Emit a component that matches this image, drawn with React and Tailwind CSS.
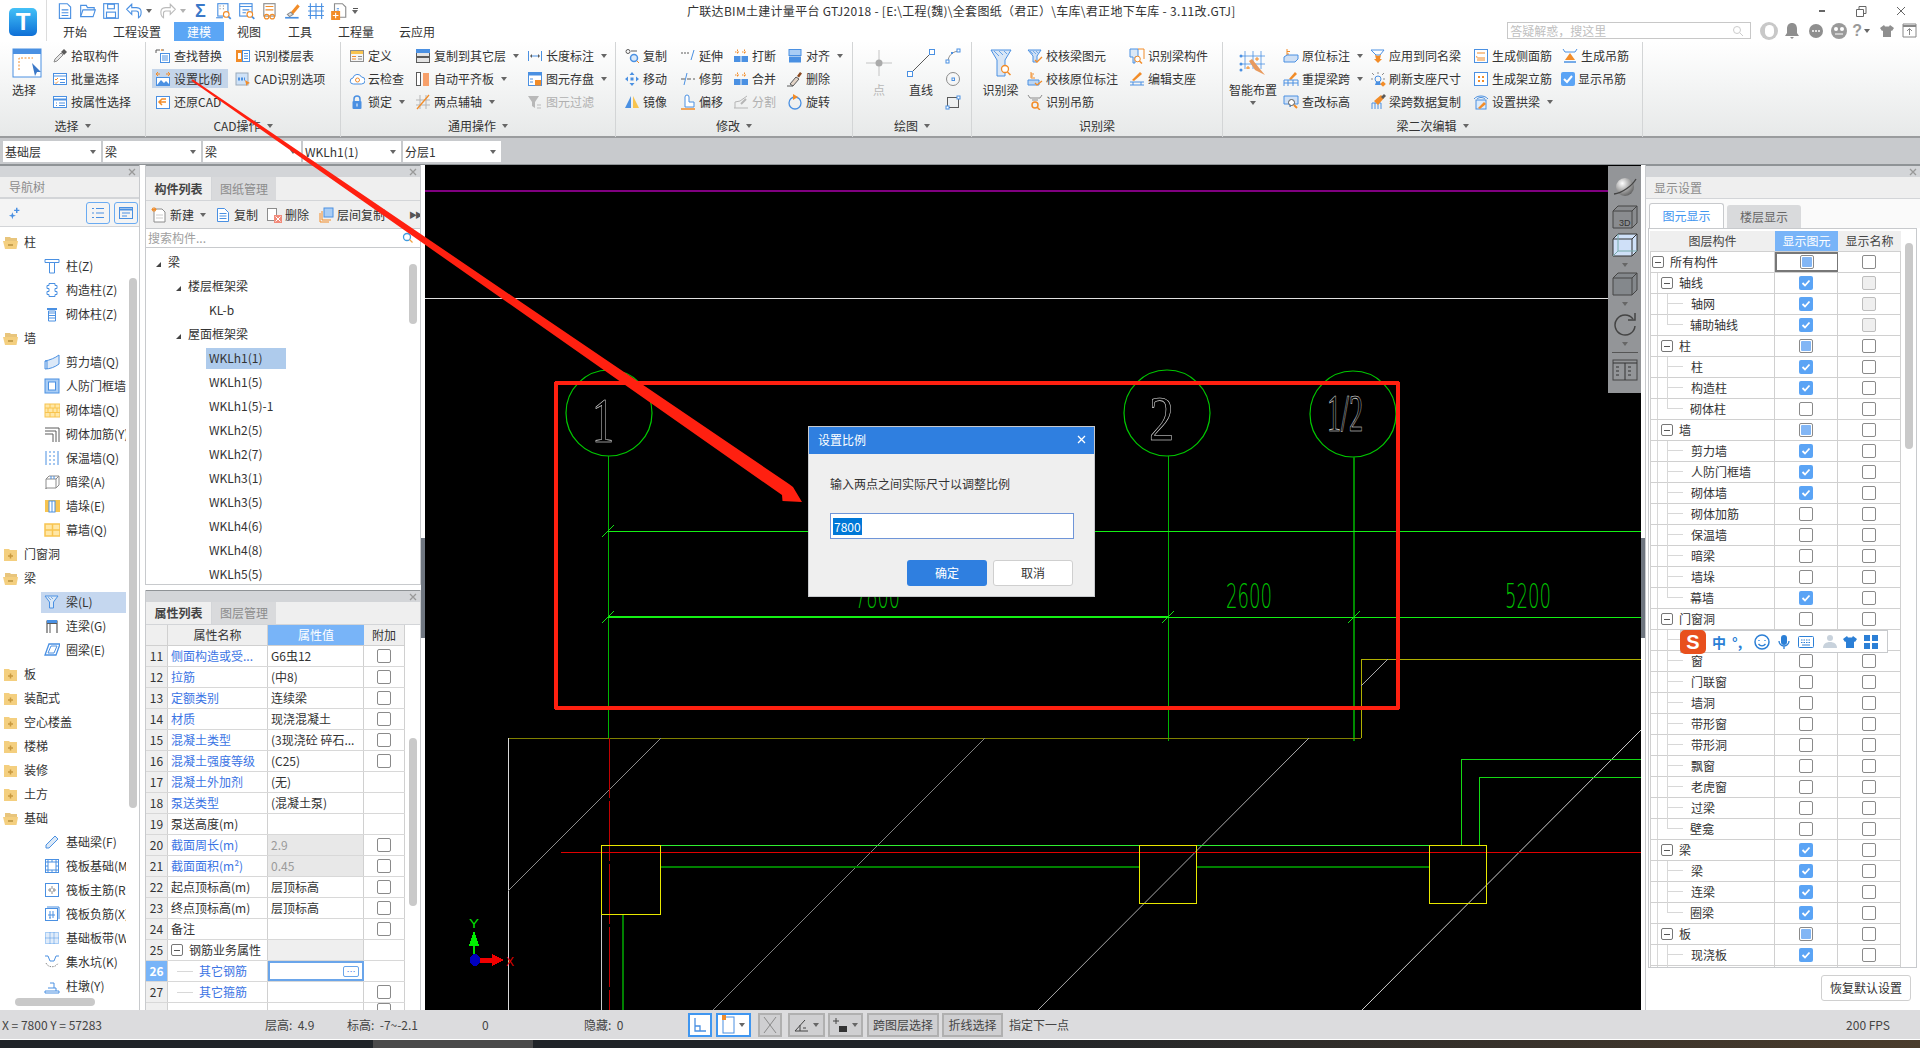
import React from 'react';

const B = '#4a90e2', O = '#f28c28', G = '#8c8c8c', L = '#a9cdf5', Y = '#f8c44f', D = '#5a5a5a';

const ICONS = {
  pick: <><path d="M2 14l1-3 6-6 2 2-6 6z" fill="#e6e6e6" stroke={G} /><path d="M9 4l3-3 3 3-3 3z" fill={D} /></>,
  batch: <><rect x="1.5" y="2.5" width="13" height="11" fill="#fff" stroke={B} /><path d="M1.5 5h13" stroke={B} /><path d="M3 8l1 1 2-2M3 11.500l1 1 2-2" stroke={O} /><path d="M8 8.500h5M8 11.500h5" stroke={B} /></>,
  attr: <><rect x="1.5" y="2.500" width="13" height="11" fill="#fff" stroke={B} /><path d="M1.500 5.500h13" stroke={B} strokeWidth="2" /><path d="M4 9h1M7 9h6M4 11.500h1M7 11.500h6" stroke={B} /></>,
  find: <><path d="M1 5V2h4M7 2h2" stroke={D} /><path d="M6 1l2 1-2 1z" fill={O} /><rect x="5.500" y="5.500" width="9" height="9" fill="#fff" stroke={B} /><path d="M7 8h6M7 10h6M7 12h6" stroke={B} /></>,
  scale: <><path d="M1 3h4M11 3h4" stroke={O} /><path d="M1 3l2-2M1 3l2 2M15 3l-2-2M15 3l-2 2" stroke={O} /><rect x="1.500" y="6.500" width="13" height="8" fill="#fff" stroke={B} /><path d="M2 14l4-5 3 3 2-2 4 4z" fill={B} /></>,
  restore: <><rect x="1.500" y="2.500" width="13" height="12" fill="#fff" stroke={B} /><path d="M11 5H7l-3 3 3 3M5 8h6" stroke={O} strokeWidth="1.500" fill="none" /></>,
  floor: <><rect x="1" y="2" width="6" height="12" fill={O} /><rect x="3" y="5" width="3" height="6" fill="#fff" /><rect x="7.500" y="2.500" width="7" height="11" fill="#fff" stroke={B} /><path d="M9 5.500h4M9 8h4M9 10.500h4" stroke={B} /></>,
  cadopt: <><rect x="1" y="2" width="12" height="12" fill="#cfe2f7" stroke="#9ab" /><path d="M3 8h7" stroke={B} strokeWidth="3" strokeDasharray="2 1" /><path d="M10 9l5 3-2.500 1-1 2z" fill={O} /></>,
  define: <><rect x="1.500" y="2.500" width="13" height="11" fill="#f5f5f5" stroke={G} /><rect x="2" y="3" width="12" height="3" fill={Y} /><path d="M3 8.500h4M3 11h4" stroke={O} /><path d="M9 8.500h4M9 11h4" stroke={G} /></>,
  cloud: <><path d="M4.500 13a3 3 0 0 1-.5-6 4.500 4.500 0 0 1 8.500-1 3.500 3.500 0 0 1 0 7z" fill="#fff" stroke={B} /><circle cx="8.500" cy="9" r="2" stroke={O} /></>,
  lock: <><path d="M5 7V5a3 3 0 0 1 6 0v2" stroke={B} strokeWidth="1.500" /><rect x="3.500" y="7" width="9" height="8" rx="1" fill={B} /><rect x="7.500" y="9.500" width="1" height="3" fill="#fff" /></>,
  copyf: <><rect x="1.500" y="1.500" width="13" height="13" fill="#e4e4e4" stroke={D} /><rect x="1" y="1" width="14" height="4" fill={B} /><path d="M2 9h12" stroke={D} strokeWidth="2" /></>,
  autofl: <><rect x="1.500" y="1.500" width="4" height="13" fill="#fff" stroke={D} /><rect x="8" y="2" width="6" height="13" fill="#f7a06a" /></>,
  twopt: <><path d="M1 6h14M1 11h14M5 1v14M11 1v14" stroke="#b5b5b5" /><path d="M2 15L14 1" stroke={O} strokeWidth="1.300" /></>,
  lenm: <><path d="M1.500 3v10M14.500 3v10M4 8h8" stroke={B} /><path d="M3 8l2-2v4zM13 8l-2-2v4z" fill={D} /></>,
  store: <><rect x="1.500" y="1.500" width="13" height="13" fill="#fff" stroke={B} /><rect x="1" y="1" width="14" height="3.500" fill={B} /><rect x="8" y="9" width="6" height="5.500" fill={O} /><path d="M3 8h3M3 11h3" stroke={B} /></>,
  filter: <><path d="M1 2h11L8 8v6l-3-2V8z" fill="#b8b8b8" /><path d="M10 11h4M10 14h4" stroke="#bbb" /></>,
  copy: <><circle cx="4" cy="3.500" r="2" stroke={D} fill="none" /><path d="M7 3h6" stroke={D} /><circle cx="10" cy="10" r="3.500" fill="#dbe9f8" stroke={B} strokeWidth="1.500" /><path d="M13 13l2 2" stroke={O} /></>,
  move: <><path d="M8 1l2.500 3h-5zM8 15l2.500-3h-5zM1 8l3-2.500v5zM15 8l-3-2.500v5z" fill={B} /><rect x="6.500" y="6.500" width="3" height="3" fill={B} /></>,
  mirror: <><path d="M7 2v12H1z" fill={B} /><path d="M9 2v12h6z" fill={Y} /></>,
  extend: <><path d="M1 5h8" stroke={D} strokeDasharray="2 1" /><path d="M11 12l3-10" stroke={B} /></>,
  trim: <><path d="M1 8h14" stroke={D} strokeDasharray="4 2" /><path d="M4 14l3-12" stroke={B} /></>,
  offset: <><path d="M5 13V3a2 2 0 0 1 4 0v5h5v5z" fill="#fff" stroke={B} /><path d="M1 15h14" stroke={O} strokeWidth="1.500" /></>,
  brk: <><rect x="1" y="8" width="6.500" height="6" fill={B} /><rect x="8.500" y="8" width="6.500" height="6" fill={B} /><path d="M2 4h5M9 4h5M4.500 1.500v5M11.500 1.500v5" stroke={O} strokeDasharray="1.500 1" /></>,
  split: <><path d="M1 14h14M2 14V8l5-1 7-5" stroke="#b5b5b5" /><path d="M8 10l5-5" stroke="#b5b5b5" strokeWidth="2" /></>,
  align: <><rect x="2" y="1.500" width="12" height="6" fill={L} stroke={B} /><rect x="2" y="8.500" width="12" height="6" fill={B} /></>,
  del: <><path d="M3 13l6-7 3 2-6 7z" fill="#e2d3c6" stroke={D} /><path d="M10 5l3-4 2 1.500-3 4z" fill="#8b4a20" /><path d="M0 15h6" stroke={D} /></>,
  rotate: <><circle cx="8" cy="9" r="6" stroke={B} strokeWidth="1.300" /><path d="M6 0l5 3-5 3z" fill={O} /></>,
  arc: <><path d="M3 14c0-6 4-10 10-11" stroke={G} fill="none" /><rect x="1" y="12" width="3" height="3" fill="#fff" stroke={B} /><rect x="12" y="1" width="3" height="3" fill="#fff" stroke={B} /><rect x="6" y="4" width="2" height="2" fill={B} /></>,
  circ: <><circle cx="8" cy="8" r="6.500" stroke={G} /><rect x="7" y="7" width="2.500" height="2.500" stroke={B} /></>,
  rct: <><rect x="2.500" y="3.500" width="11" height="10" stroke={D} /><rect x="1" y="12" width="3" height="3" fill="#fff" stroke={B} /><rect x="12" y="2" width="3" height="3" fill="#fff" stroke={B} /></>,
  chkbeam: <><path d="M1 2h13L10 8v6H6V8z" fill="#cfe0f5" stroke={B} /><path d="M3 3l3 3M6 3l3 3M9 3l2 2" stroke={B} strokeWidth=".7" /><path d="M8 12l2 2 5-5" stroke={O} strokeWidth="1.300" /></>,
  chkorig: <><path d="M4 1v6h4M4 3h3M4 5h2" stroke={O} /><path d="M1 9h11v5H1z" fill="#bcd6f3" stroke={B} /><path d="M8 12l2 2 5-4" stroke={O} strokeWidth="1.300" /></>,
  hang: <><path d="M1 1l2 3h10l2-3M5 6h6" stroke={G} /><circle cx="8" cy="11" r="3" stroke={O} strokeWidth="1.500" /><path d="M10 13l3 3" stroke={O} strokeWidth="1.500" /></>,
  idcomp: <><path d="M1 1h8v8H6v6H4V9H1z" fill="#dbe8f6" stroke={B} /><path d="M9 1h6v10" stroke={O} /><circle cx="8.500" cy="11" r="2.800" stroke={O} fill="#fff" /><path d="M10.500 13l2.500 2.500" stroke={O} strokeWidth="1.500" /></>,
  support: <><path d="M3 9l8-8 2 2-8 7z" fill={O} /><path d="M1 11h14M1 14h14M4 11v3M12 11v3" stroke={B} /></>,
  orig: <><path d="M4 1v7h4M4 3.500h3M4 6h2" stroke={O} /><path d="M1 9l3-2h11v4l-3 3H1z" fill="#cfe0f5" stroke={B} /></>,
  applysame: <><path d="M1 2h13L10 7H6z" stroke={B} fill="#fff" /><path d="M5 7l3 1 3-1-1 4h2l-4 4-4-4h2z" fill={O} /></>,
  reraise: <><path d="M6 8l6-7 2 2-6 6z" fill={O} /><path d="M1 15V9h14v6M5 9v6M10 9v6M1 12h14" stroke={B} /></>,
  refresh: <><path d="M2 2l2 2M14 2l-2 2M1 8h2M13 8h2M8 1v2" stroke={G} /><circle cx="8" cy="8" r="3" stroke={B} /><path d="M6 11h4l1 3H5z" fill={B} /><rect x="11" y="11" width="4" height="4" fill={O} transform="rotate(45 13 13)" /></>,
  sidebar: <><rect x="1.500" y="1.500" width="13" height="13" fill="#fff" stroke={B} /><path d="M4 5h8M4 8c-1 1 0 2 1 2h7M4 12h8" stroke={O} fill="none" /></>,
  erect: <><rect x="1.500" y="1.500" width="13" height="13" fill="#fff" stroke={B} /><path d="M5 5h2v2H5zM9 5h2v2H9zM5 9h2v2H5zM9 9h2v2H9z" fill={O} /></>,
  hangrb: <><path d="M1 1l2 3h10l2-3" stroke={B} /><path d="M8 5l5 7H3z" fill={O} /><path d="M2 14h12" stroke={B} strokeWidth="1.500" /></>,
  chg: <><path d="M1 2h14v8H9l-2 3V10H1z" fill="#cfe0f5" stroke={B} /><circle cx="8.500" cy="8.500" r="3" fill="#fff" stroke={D} /><path d="M11 11l3 3" stroke={O} strokeWidth="2" /></>,
  spancopy: <><path d="M2 15V9h9v6M5 9v6M8 9v6" stroke={B} /><path d="M4 7l7-6 3 3-6 7z" fill={O} /><path d="M11 3l3-3 2 2-3 3z" fill={D} /></>,
  arch: <><path d="M1 5c3-4 11-4 14 0M4 5c2-2 6-2 8 0" stroke={B} fill="none" /><rect x="3" y="6" width="10" height="9" fill="#dcebfa" stroke={B} /><path d="M5 14l6-6 2 2-6 5z" fill={O} /></>,
  shoW: <><rect x="1" y="1" width="14" height="14" rx="2" fill="#5ba4f5" /><path d="M4 8l3 3 5-6" stroke="#fff" strokeWidth="2" /></>,
  qnew: <><path d="M3 1.500h7l3 3v10H3z" fill="#fff" stroke={B} /><path d="M5 7h6M5 9.500h6M5 12h6" stroke={B} /></>,
  qopen: <><path d="M1.500 13V3h5l1 2h6v2" stroke={B} /><path d="M1.500 13l2-6h11l-2 6z" fill="#fff" stroke={B} /></>,
  qsave: <><rect x="1.500" y="1.500" width="13" height="13" fill="#fff" stroke={B} /><rect x="5" y="2" width="6" height="4" stroke={B} /><rect x="4" y="9" width="8" height="5" stroke={B} /></>,
  qundo: <><path d="M6 2L1.500 6.500 6 11V8h4a2 2 0 0 1 2 2v4c2-1 3-4 2-7-.7-1.500-2-2-4-2H6z" fill="#fff" stroke={B} /></>,
  qredo: <><path d="M10 2l4.500 4.500L10 11V8H6a2 2 0 0 0-2 2v4C2 13 1 10 2 7c.7-1.500 2-2 4-2h4z" fill="#fff" stroke="#bbb" /></>,
  qcalc: <><rect x="2.500" y="1.500" width="9" height="11" fill="#fff" stroke={B} /><path d="M4 3.500h1M7 3.500h1M4 6h1M7 6h1" stroke={G} /><circle cx="10" cy="11" r="2.500" stroke={O} fill="#fff" /><path d="M12 13l2 2" stroke={B} strokeWidth="1.500" /><path d="M1 14h6" stroke={B} /></>,
  qgrid: <><rect x="1.500" y="1.500" width="11" height="11" fill="#fff" stroke={B} /><path d="M1.500 4h11M4 7h6M4 9.500h3" stroke={B} /><circle cx="10.500" cy="11" r="2.500" stroke={O} fill="#fff" /><path d="M12.500 13l2 2" stroke={B} strokeWidth="1.500" /></>,
  qbill: <><rect x="2.500" y="1.500" width="10" height="11" fill="#fff" stroke={G} /><path d="M4 4h7M4 7h7" stroke={O} /><circle cx="5" cy="13" r="2" stroke={O} /><circle cx="10" cy="13" r="2" stroke={O} /></>,
  qpen: <><path d="M6 9l6-7 2 2-6 7z" fill={O} /><path d="M1 14h12" stroke={B} strokeWidth="1.500" /><path d="M3 11l3-2 2 2-3 2z" fill="#ddd" stroke={G} /></>,
  qnet: <><path d="M3 1v14M8 1v14M13 1v14M1 4h14M1 8h14M1 12h14" stroke={B} /></>,
  qadd: <><path d="M4 1.500h7l3 3v9H4z" fill="#fff" stroke={G} /><path d="M6 6h2M6 8h2" stroke={B} /><rect x="1" y="8" width="8" height="8" fill={O} /><path d="M5 9.500v5M2.500 12h5" stroke="#fff" /></>,
  ncol: <><path d="M1 1.500h14v3H1z" stroke={B} fill="#fff" /><path d="M5.500 4.500h5V15h-5z" stroke={B} fill="#fff" /></>,
  ngzz: <><path d="M5 1.500h6v2h2v3h-2v3h2v3h-2v2H5v-2H3v-3h2v-3H3v-3h2z" stroke={B} fill="#fff" /></>,
  nqtz: <><path d="M3 2h10v2H3z" fill={B} /><path d="M4.500 5h7v10h-7z" stroke={B} fill="#fff" /><path d="M5 7h6M5 9.500h6M5 12h6" stroke={B} /></>,
  njlq: <><path d="M1 7c5-1 10-3 14-6v9c-4 3-9 5-14 5z" fill="#dce9f8" stroke={B} /><path d="M1 7h2v8M15 1" stroke={B} /></>,
  nrfm: <><rect x="1" y="1" width="14" height="14" fill={L} stroke={B} /><rect x="4.500" y="4" width="7" height="8" fill="#fff" stroke={B} /></>,
  nbrick: <><rect x="1" y="2" width="15" height="13" fill="#ffe7a6" stroke={Y} /><path d="M1 6h15M1 10.500h15M6 2v4M11 2v4M4 6v4.500M9 6v4.500M13 6v4.500M6 10.500V15M11 10.500V15" stroke={Y} /></>,
  njj: <><path d="M1 2h14M1 5h11v11M1 8h8v8" stroke={D} /><path d="M15 2v14" stroke={D} /></>,
  nbw: <><path d="M2 1v14M14 1v14" stroke={B} /><path d="M6 1v14M10 1v14" stroke={B} strokeDasharray="2 2" /></>,
  nal: <><path d="M2 15V5l3-3h10v9l-3 3H2zM2 5h10v9M12 5l3-3" stroke={G} fill="#fff" /><path d="M7 2v3M10 2v3" stroke={B} /></>,
  nqd: <><rect x="1" y="2" width="15" height="12" fill={Y} /><rect x="5" y="3" width="6" height="11" fill="#fff" stroke={B} /><path d="M8 3v11" stroke={B} /></>,
  nmq: <><rect x="1" y="2" width="15" height="12" fill="#ffe7a6" stroke={Y} strokeWidth="1.500" /><path d="M8.500 2v12M1 8h15" stroke={Y} strokeWidth="1.500" /></>,
  nliang: <><path d="M1 2h13L9.500 8v6h-4V8z" fill="#dbe8f6" stroke={B} /><path d="M4 3l3 3M7 3l2 2" stroke={B} strokeWidth=".7" /></>,
  nll: <><path d="M3 15V3h10v12M3 5.500h10" stroke={D} strokeWidth="1.200" /><path d="M3 2h10v3H3z" fill={B} /><path d="M6 6v9" stroke={D} /></>,
  nql: <><path d="M5 2h11l-4 11H1z" fill="#fff" stroke={B} strokeWidth="1.300" /><path d="M7 4h6l-3 7H4z" stroke={B} /></>,
  njcl: <><path d="M2 11L11 2l3 3-9 9H2z" fill="#dbe8f6" stroke={B} /><path d="M4 9l5-5" stroke={B} strokeDasharray="2 1" /></>,
  nfb: <><rect x="1.500" y="1.500" width="13" height="13" fill="#fff" stroke={B} /><rect x="4" y="4" width="8" height="8" stroke={B} /><path d="M1 4h3M1 8h3M1 12h3M12 4h3M12 8h3M12 12h3M4 1v3M8 1v3M12 1v3M4 12v3M8 12v3M12 12v3" stroke={B} /></>,
  nfz: <><rect x="1.500" y="1.500" width="13" height="13" fill="#fff" stroke={B} /><path d="M4 8h3M9 8h3M8 4v3M8 9v3M6 6v4M10 6v4" stroke={G} /></>,
  nff: <><rect x="1.500" y="2.500" width="12" height="12" fill="#fff" stroke={B} /><path d="M3 1h12v12" stroke={B} /><path d="M4 9h7M6 5v7M9 5v7M5 12h2" stroke={B} /></>,
  njb: <><rect x="1.500" y="2.500" width="13" height="11" fill="#e0ecfa" stroke={L} /><path d="M6 2.500v11M10 2.500v11M1.500 8h13" stroke={B} strokeDasharray="1 1" /></>,
  njs: <><path d="M1 2h3l2 5h4l2-5h3" stroke={B} /><path d="M2 9c2 5 10 5 12 0" stroke={G} strokeDasharray="1.500 1" /></>,
  nzd: <><path d="M1 13h14v2H1zM4 10h8v3M6 5h4v5" stroke={B} fill="#fff" /></>,
  cnew: <><path d="M3 2h8l3 3v10H3z" fill="#fff" stroke={G} /><path d="M5 8h7M5 11h7" stroke="#ccc" /><path d="M3 0v5M0.500 2.500h5M1 1l4 3M5 1L1 4" stroke={O} /></>,
  ccopy: <><path d="M2.500 1.500h7l4 4v9h-11z" fill="#fff" stroke={B} /><path d="M4.500 6.500h7M4.500 9h7M4.500 11.500h7" stroke={B} /></>,
  cdel: <><rect x="1.500" y="1.500" width="9" height="12" fill="#fff" stroke={G} /><rect x="8" y="8" width="8" height="8" fill="#f28a7a" /><path d="M9.500 9.500l5 5M14.500 9.500l-5 5" stroke="#fff" /></>,
  clayer: <><rect x="6" y="1" width="9" height="9" fill={L} stroke={B} /><path d="M4 4v9h9M2 6v9h9" stroke={O} /></>,
  cplus: <><path d="M1 11l3-1 1-3 1 3 3 1-3 1-1 3-1-3z" fill={B} /><path d="M10 2v6M7 5h6" stroke={B} strokeWidth="1.700" /></>,
};

const Ic = ({ n, s = 16 }) => (
  <svg width={s} height={s} viewBox="0 0 16 16" fill="none" className="flex-none block">{ICONS[n]}</svg>
);

const Caret = ({ c = 'ml-[7px]' }) => (
  <span className={'inline-block flex-none w-0 h-0 border-x-[3px] border-t-[4px] border-x-transparent border-t-[#666] ' + c} />
);

const RI = ({ i, t, dd, dim }) => (
  <div className="flex items-center h-[23px]">
    <Ic n={i} />
    <span className={'ml-[3px] whitespace-nowrap ' + (dim ? 'text-[#b0b0b0]' : '')}>{t}</span>
    {dd && <Caret />}
  </div>
);

const Group = ({ w, label, dd, pad, children }) => (
  <div className={'flex flex-col h-[95px] mt-[1px] flex-none border-r border-[#d3d5d6] ' + w}>
    <div className={'flex pt-[2px] h-[75px] ' + pad}>{children}</div>
    <div className="flex items-center justify-center h-[18px] text-[#333]">
      <span>{label}</span>
      {dd && <Caret c="ml-[6px]" />}
    </div>
  </div>
);

const LargeSvg = ({ children }) => (
  <svg width="30" height="30" viewBox="0 0 30 30" fill="none" className="flex-none block">{children}</svg>
);

const Large = ({ w, t, dim, children, dd }) => (
  <div className={'flex flex-col items-center flex-none pt-[4px] ' + w}>
    <LargeSvg>{children}</LargeSvg>
    <span className={'mt-[6px] whitespace-nowrap ' + (dim ? 'text-[#b8b8b8]' : '')}>{t}</span>
    {dd && <Caret c="mt-[5px]" />}
  </div>
);

const Col = ({ w, children }) => <div className={'flex flex-col flex-none ' + w}>{children}</div>;

const Ribbon = () => (
  <div className="flex h-[97px] bg-gradient-to-b from-white to-[#e7e9e9] border-b-2 border-[#9a9c9e]">
    <Group w="w-[146px]" label="选择" dd pad="pl-[13px]">
      <Large w="w-[40px] items-start -ml-[1px]" t="选择">
        <rect x="1" y="1" width="28" height="28" fill="#fff" stroke={B} />
        <rect x="1" y="1" width="28" height="5" fill={B} />
        <path d="M7 22V10h14" stroke={O} strokeDasharray="2 1.500" />
        <path d="M20 15l9 9-4 0-2 4z" fill="#3a78c8" />
      </Large>
      <Col w="w-[90px]">
        <RI i="pick" t="拾取构件" />
        <RI i="batch" t="批量选择" />
        <RI i="attr" t="按属性选择" />
      </Col>
    </Group>
    <Group w="w-[195px]" label="CAD操作" dd pad="pl-[9px]">
      <Col w="w-[80px]">
        <RI i="find" t="查找替换" />
        <div className="flex items-center h-[19px] my-[2px] -ml-[3px] pl-[3px] w-[76px] bg-[#c4d5ea]">
          <Ic n="scale" />
          <span className="ml-[3px] whitespace-nowrap">设置比例</span>
        </div>
        <RI i="restore" t="还原CAD" />
      </Col>
      <Col w="w-[100px]">
        <RI i="floor" t="识别楼层表" />
        <RI i="cadopt" t="CAD识别选项" />
      </Col>
    </Group>
    <Group w="w-[275px]" label="通用操作" dd pad="pl-[8px]">
      <Col w="w-[66px]">
        <RI i="define" t="定义" />
        <RI i="cloud" t="云检查" />
        <RI i="lock" t="锁定" dd />
      </Col>
      <Col w="w-[112px]">
        <RI i="copyf" t="复制到其它层" dd />
        <RI i="autofl" t="自动平齐板" dd />
        <RI i="twopt" t="两点辅轴" dd />
      </Col>
      <Col w="w-[85px]">
        <RI i="lenm" t="长度标注" dd />
        <RI i="store" t="图元存盘" dd />
        <RI i="filter" t="图元过滤" dim />
      </Col>
    </Group>
    <Group w="w-[237px]" label="修改" dd pad="pl-[8px]">
      <Col w="w-[56px]">
        <RI i="copy" t="复制" />
        <RI i="move" t="移动" />
        <RI i="mirror" t="镜像" />
      </Col>
      <Col w="w-[53px]">
        <RI i="extend" t="延伸" />
        <RI i="trim" t="修剪" />
        <RI i="offset" t="偏移" />
      </Col>
      <Col w="w-[54px]">
        <RI i="brk" t="打断" />
        <RI i="brk" t="合并" />
        <RI i="split" t="分割" dim />
      </Col>
      <Col w="w-[64px]">
        <RI i="align" t="对齐" dd />
        <RI i="del" t="删除" />
        <RI i="rotate" t="旋转" />
      </Col>
    </Group>
    <Group w="w-[119px]" label="绘图" dd pad="pl-[11px]">
      <Large w="w-[30px] mr-[12px]" t="点" dim>
        <path d="M15 2v26M2 15h26" stroke="#c4c4c4" />
        <circle cx="15" cy="15" r="3.500" fill="#aaa" />
      </Large>
      <Large w="w-[30px] mr-[9px]" t="直线">
        <path d="M4 26L26 4" stroke={D} />
        <rect x="1.500" y="23.500" width="5" height="5" fill="#fff" stroke={B} />
        <rect x="23.500" y="1.500" width="5" height="5" fill="#fff" stroke={B} />
      </Large>
      <Col w="w-[16px]">
        <div className="h-[23px] flex items-center"><Ic n="arc" /></div>
        <div className="h-[23px] flex items-center"><Ic n="circ" /></div>
        <div className="h-[23px] flex items-center"><Ic n="rct" /></div>
      </Col>
    </Group>
    <Group w="w-[251px]" label="识别梁" pad="pl-[10px]">
      <Large w="w-[37px] mr-[8px]" t="识别梁">
        <path d="M5 2h20l-6 10v16h-8V12z" fill="#d8e6f6" stroke={B} />
        <path d="M8 3l5 5M13 3l4 4M18 3l3 3" stroke={B} strokeWidth=".8" />
        <circle cx="19" cy="21" r="3.500" fill="#fff" stroke={O} strokeWidth="1.300" />
        <path d="M21.500 24l3 3" stroke={O} strokeWidth="1.500" />
      </Large>
      <Col w="w-[102px]">
        <RI i="chkbeam" t="校核梁图元" />
        <RI i="chkorig" t="校核原位标注" />
        <RI i="hang" t="识别吊筋" />
      </Col>
      <Col w="w-[90px]">
        <RI i="idcomp" t="识别梁构件" />
        <RI i="support" t="编辑支座" />
      </Col>
    </Group>
    <Group w="w-[420px]" label="梁二次编辑" dd pad="pl-[6px]">
      <Large w="w-[48px] mr-[6px]" t="智能布置" dd>
        <path d="M7 3v18M15 3v18M23 3v18M3 8h24M3 16h24" stroke={B} strokeWidth=".8" />
        <circle cx="3" cy="8" r="1.500" fill={B} />
        <circle cx="3" cy="16" r="1.500" fill={B} />
        <circle cx="3" cy="22" r="1.500" fill={B} />
        <path d="M11 11l4-2M17 22l-6-9 3-2 8 10 5 6z" fill="#e89a5e" />
        <path d="M19 9v4M17 11h4M10 18v3M8 20h4" stroke={O} />
      </Large>
      <Col w="w-[87px]">
        <RI i="orig" t="原位标注" dd />
        <RI i="reraise" t="重提梁跨" dd />
        <RI i="chg" t="查改标高" />
      </Col>
      <Col w="w-[103px]">
        <RI i="applysame" t="应用到同名梁" />
        <RI i="refresh" t="刷新支座尺寸" />
        <RI i="spancopy" t="梁跨数据复制" />
      </Col>
      <Col w="w-[89px]">
        <RI i="sidebar" t="生成侧面筋" />
        <RI i="erect" t="生成架立筋" />
        <RI i="arch" t="设置拱梁" dd />
      </Col>
      <Col w="w-[70px]">
        <RI i="hangrb" t="生成吊筋" />
        <div className="-ml-[2px]"><div className="flex items-center h-[23px]"><Ic n="shoW" /><span className="ml-[2px] whitespace-nowrap">显示吊筋</span></div></div>
      </Col>
    </Group>
  </div>
);

const Header = () => (
  <div className="flex h-[41px] bg-white">
    <div className="w-[47px] flex-none border-r border-[#dcdcdc] pl-[9px] pt-[8px] flex items-start">
      <div className="w-[28px] h-[28px] rounded-[5px] bg-gradient-to-b from-[#44c1f7] to-[#0f6fd6] flex items-center justify-center text-white text-[24px] font-bold [font-family:'Liberation_Sans',sans-serif]">T</div>
    </div>
    <div className="flex-1 flex flex-col">
      <div className="flex h-[22px] items-center">
        <div className="flex items-center w-[640px] pl-[6px]">
          {['qnew', 'qopen', 'qsave', 'qundo'].map((n) => (
            <span key={n} className="w-[23px] flex-none flex justify-center"><Ic n={n} s={18} /></span>
          ))}
          <Caret c="ml-[1px] mr-[4px]" />
          <span className="w-[23px] flex-none flex justify-center"><Ic n="qredo" s={18} /></span>
          <Caret c="ml-[1px] mr-[3px] opacity-50" />
          <span className="w-[23px] flex-none text-center text-[#3a78c8] text-[18px] font-bold [font-family:'Liberation_Sans',sans-serif]">Σ</span>
          {['qcalc', 'qgrid', 'qbill', 'qpen', 'qnet', 'qadd'].map((n) => (
            <span key={n} className="w-[23px] flex-none flex justify-center"><Ic n={n} s={18} /></span>
          ))}
          <span className="ml-[2px] flex flex-col items-center gap-[1px]">
            <span className="block w-[5px] h-[1px] bg-[#555]" />
            <Caret c="" />
          </span>
        </div>
        <div className="whitespace-nowrap text-[#333] tracking-[0.3px]">广联达BIM土建计量平台 GTJ2018 - [E:\工程(魏)\全套图纸（君正）\车库\君正地下车库 - 3.11改.GTJ]</div>
        <div className="ml-auto flex items-center text-[#555]">
          <span className="w-[6px] h-[2px] bg-[#666] mr-[30px]" />
          <svg width="12" height="12" viewBox="0 0 12 12" fill="none" className="mr-[28px]"><path d="M1.500 4.500h7v7h-7zM4 4.500v-3h7v7H8.500" stroke="#666" /></svg>
          <svg width="12" height="12" viewBox="0 0 12 12" fill="none" className="mr-[13px]"><path d="M2 2l8 8M10 2l-8 8" stroke="#666" /></svg>
        </div>
      </div>
      <div className="flex h-[19px]">
        <div className="flex h-full items-center">
          <span className="ml-[16px] w-[50px]">开始</span>
          <span className="w-[61px]">工程设置</span>
          <span className="ml-[0px] w-[50px] h-full bg-[#5ba6f5] text-white flex items-center justify-center">建模</span>
          <span className="ml-[13px] w-[51px]">视图</span>
          <span className="w-[50px]">工具</span>
          <span className="w-[61px]">工程量</span>
          <span>云应用</span>
        </div>
        <div className="ml-auto flex items-center pb-[2px]">
          <div className="w-[244px] h-[17px] border border-[#c8c8c8] flex items-center px-[2px] text-[#c0c0c0]">
            <span>答疑解惑，搜这里</span>
            <svg width="12" height="12" viewBox="0 0 12 12" fill="none" className="ml-auto mr-[4px]"><circle cx="5" cy="5" r="3.500" stroke="#ccc" /><path d="M8 8l3 3" stroke="#ccc" /></svg>
          </div>
          <span className="ml-[9px] w-[18px] h-[18px] rounded-full bg-[#c8c8c8] flex items-center justify-center"><span className="block w-[9px] h-[12px] rounded-full bg-white" /></span>
          <svg width="16" height="18" viewBox="0 0 16 18" className="ml-[6px]"><path d="M8 1c3 0 5 2 5 6v4l2 3H1l2-3V7c0-4 2-6 5-6zM6 15h4l-2 2z" fill="#8f8f8f" /></svg>
          <svg width="16" height="16" viewBox="0 0 16 16" className="ml-[8px]"><circle cx="8" cy="8" r="7" fill="#8f8f8f" /><path d="M4 8h2M7 8h2M10 8h2" stroke="#fff" strokeWidth="1.500" /></svg>
          <svg width="18" height="18" viewBox="0 0 18 18" className="ml-[6px]"><circle cx="9" cy="9" r="8" fill="#9a9a9a" /><circle cx="6" cy="7" r="2" fill="#fff" /><circle cx="12" cy="7" r="2" fill="#fff" /><path d="M5 12h8" stroke="#fff" /></svg>
          <span className="ml-[4px] text-[#999] text-[16px] font-bold [font-family:'Liberation_Sans',sans-serif]">?</span>
          <Caret c="ml-[2px]" />
          <svg width="14" height="14" viewBox="0 0 14 14" className="ml-[10px]"><path d="M4 1L0 4l2 3 1-.5V13h8V6.500L12 7l2-3-4-3-1 1.500H5z" fill="#8f8f8f" /></svg>
          <svg width="15" height="15" viewBox="0 0 15 15" fill="none" className="ml-[8px] mr-[3px]"><path d="M1 1h13v13H1z" stroke="#888" /><path d="M1 3h13" stroke="#888" strokeWidth="2" /><path d="M7.500 12V6M5 8l2.500-2.500L10 8" stroke="#888" /></svg>
        </div>
      </div>
    </div>
  </div>
);

const Combo = ({ t }) => (
  <div className="w-[98px] h-[21px] bg-white flex items-center pl-[2px] pr-[5px] text-[#333]">
    <span>{t}</span>
    <Caret c="ml-auto" />
  </div>
);

const ComboBar = () => (
  <div className="flex items-start gap-[2px] h-[27px] pt-[3px] pl-[3px] bg-[#c8cacd] border-b border-[#8f9396]">
    {['基础层', '梁', '梁', 'WKLh1(1)', '分层1'].map((t, i) => <Combo key={i} t={t} />)}
  </div>
);

const PanelTitle = () => (
  <div className="h-[12px] flex-none bg-[#d3d5d8] border-t border-[#8f9396] flex items-center justify-end pr-[3px]">
    <svg width="8" height="8" viewBox="0 0 8 8" fill="none"><path d="M1 1l6 6M7 1L1 7" stroke="#999" strokeWidth="1.300" /></svg>
  </div>
);

const Folder = ({ open }) => (
  <svg width="17" height="15" viewBox="0 0 17 15" className="flex-none">
    {open ? (
      <>
        <path d="M2 2h5l1 1h6v3H2z" fill="#e8c57c" />
        <path d="M0 6h15l-1.500 8H2z" fill="#f4cf7f" />
        <path d="M5 10h5" stroke="#b8923f" strokeWidth="1.500" />
      </>
    ) : (
      <>
        <path d="M1 2h5l1 1h7v11H1z" fill="#f4cf7f" />
        <path d="M5 9h5M7.500 6.500v5" stroke="#c8993f" strokeWidth="1.500" />
      </>
    )}
  </svg>
);

const NAV = [
  ['f', '柱', 1], ['i', '柱(Z)', 'ncol'], ['i', '构造柱(Z)', 'ngzz'], ['i', '砌体柱(Z)', 'nqtz'],
  ['f', '墙', 1], ['i', '剪力墙(Q)', 'njlq'], ['i', '人防门框墙', 'nrfm'], ['i', '砌体墙(Q)', 'nbrick'], ['i', '砌体加筋(Y)', 'njj'], ['i', '保温墙(Q)', 'nbw'], ['i', '暗梁(A)', 'nal'], ['i', '墙垛(E)', 'nqd'], ['i', '幕墙(Q)', 'nmq'],
  ['f', '门窗洞', 0], ['f', '梁', 1], ['s', '梁(L)', 'nliang'], ['i', '连梁(G)', 'nll'], ['i', '圈梁(E)', 'nql'],
  ['f', '板', 0], ['f', '装配式', 0], ['f', '空心楼盖', 0], ['f', '楼梯', 0], ['f', '装修', 0], ['f', '土方', 0], ['f', '基础', 1],
  ['i', '基础梁(F)', 'njcl'], ['i', '筏板基础(M)', 'nfb'], ['i', '筏板主筋(R)', 'nfz'], ['i', '筏板负筋(X)', 'nff'], ['i', '基础板带(W)', 'njb'], ['i', '集水坑(K)', 'njs'], ['i', '柱墩(Y)', 'nzd'],
];

const NavPanel = () => (
  <div className="w-[140px] flex-none flex flex-col border-r border-[#c8cacd] relative bg-white">
    <PanelTitle />
    <div className="h-[22px] flex-none bg-[#efefef] border-b-2 border-[#d3d5d8] flex items-center pl-[9px] text-[#8c8c8c]">导航树</div>
    <div className="h-[28px] flex-none bg-[#f4f4f4] border-b border-[#d3d5d8] flex items-center pl-[8px]">
      <Ic n="cplus" s={14} />
      <span className="ml-auto w-[24px] h-[22px] border border-[#6aabf2] rounded-[3px] flex items-center justify-center">
        <svg width="14" height="14" viewBox="0 0 14 14" fill="none"><path d="M1 2.500h2M5 2.500h8M1 7h2M5 7h8M1 11.500h2M5 11.500h8" stroke={B} /></svg>
      </span>
      <span className="ml-[4px] mr-[1px] w-[24px] h-[22px] border border-[#6aabf2] rounded-[3px] flex items-center justify-center">
        <svg width="14" height="14" viewBox="0 0 14 14" fill="none"><rect x=".5" y="1.500" width="13" height="11" stroke={B} /><path d="M1 3.500h12" stroke={B} strokeWidth="2" /><path d="M3 7h8M3 10h5" stroke={B} /></svg>
      </span>
    </div>
    <div className="flex-1 overflow-hidden pt-[3px] w-[126px] text-[#333]">
      {NAV.map(([k, t, x], idx) =>
        k === 'f' ? (
          <div key={idx} className="flex items-center h-[24px] pl-[3px]">
            <Folder open={x === 1} />
            <span className="ml-[4px] whitespace-nowrap">{t}</span>
          </div>
        ) : (
          <div key={idx} className="flex items-center h-[24px]">
            <div className={'flex items-center h-[21px] w-[85px] pl-[3px] ml-[41px] overflow-hidden ' + (k === 's' ? 'bg-[#c5d7ef]' : '')}>
              <Ic n={x} />
              <span className="ml-[6px] whitespace-nowrap">{t}</span>
            </div>
          </div>
        )
      )}
    </div>
    <div className="absolute left-[129px] top-[113px] w-[8px] h-[530px] rounded-full bg-[#c9c9c9]" />
    <div className="absolute left-[15px] top-[833px] w-[80px] h-[8px] rounded-full bg-[#c9c9c9]" />
  </div>
);

const Tabs2 = ({ a, b, h }) => (
  <div className={'flex-none bg-[#efefef] flex border-b border-[#d3d5d8] ' + h}>
    <div className="w-[65px] flex items-center justify-center font-bold text-[#444]">{a}</div>
    <div className="w-[65px] flex items-center justify-center bg-[#d9dadc] text-[#8c8c8c] border-l border-[#d3d5d8]">{b}</div>
  </div>
);

const TR = ({ t, lvl, sel }) => {
  if (lvl < 2)
    return (
      <div className={'flex items-center h-[24px] ' + (lvl === 0 ? 'pl-[156px]' : 'pl-[176px]')}>
        <span className="w-0 h-0 border-l-[5px] border-t-[5px] border-l-transparent border-t-transparent border-r-0 border-b-[5px] border-b-[#444] mr-[7px]" />
        <span>{t}</span>
      </div>
    );
  return (
    <div className="flex items-center h-[24px] pl-[206px]">
      <span className={'h-[21px] w-[80px] flex items-center pl-[3px] ' + (sel ? 'bg-[#aecbec]' : '')}>{t}</span>
    </div>
  );
};

const CompPanel = () => (
  <div className="h-[420px] flex-none flex flex-col border-b border-[#c8cacd] border-x relative bg-white">
    <PanelTitle />
    <Tabs2 a="构件列表" b="图纸管理" h="h-[24px]" />
    <div className="h-[27px] flex-none bg-[#efefef] flex items-center pl-[5px] whitespace-nowrap overflow-hidden">
      <Ic n="cnew" />
      <span className="ml-[3px] flex-none">新建</span>
      <Caret c="ml-[6px]" />
      <span className="ml-[9px] flex-none"><Ic n="ccopy" /></span>
      <span className="ml-[3px] flex-none">复制</span>
      <span className="ml-[8px] flex-none"><Ic n="cdel" /></span>
      <span className="ml-[3px] flex-none">删除</span>
      <span className="ml-[9px] flex-none"><Ic n="clayer" /></span>
      <span className="ml-[3px] flex-none">层间复制</span>
      <span className="ml-[24px] flex-none text-[#555] text-[8px] tracking-[-2px]">▶▶</span>
    </div>
    <div className="h-[20px] flex-none bg-white border-y border-[#c8cacd] flex items-center pl-[2px] text-[#a0a0a0]">
      <span>搜索构件...</span>
      <svg width="12" height="12" viewBox="0 0 12 12" fill="none" className="ml-auto mr-[6px]"><circle cx="5" cy="5" r="3.500" stroke="#3f9be0" strokeWidth="1.300" /><path d="M7.500 7.500l3 3" stroke="#f0a040" strokeWidth="1.300" /></svg>
    </div>
    <div className="flex-1 overflow-hidden pt-[2px] -ml-[146px] text-[#333]">
      <TR t="梁" lvl={0} />
      <TR t="楼层框架梁" lvl={1} />
      <TR t="KL-b" lvl={2} />
      <TR t="屋面框架梁" lvl={1} />
      <TR t="WKLh1(1)" lvl={2} sel />
      {['WKLh1(5)', 'WKLh1(5)-1', 'WKLh2(5)', 'WKLh2(7)', 'WKLh3(1)', 'WKLh3(5)', 'WKLh4(6)', 'WKLh4(8)', 'WKLh5(5)'].map((t) => (
        <TR key={t} t={t} lvl={2} />
      ))}
    </div>
    <div className="absolute left-[263px] top-[99px] w-[8px] h-[60px] rounded-full bg-[#c9c9c9]" />
  </div>
);

const Box = ({ s = 'u' }) => {
  if (s === 'c')
    return (
      <span className="w-[14px] h-[14px] rounded-[2px] bg-[#5ba4f5] flex items-center justify-center">
        <svg width="10" height="10" viewBox="0 0 10 10" fill="none"><path d="M1.500 5l2.500 2.500L8.500 2.500" stroke="#fff" strokeWidth="1.800" /></svg>
      </span>
    );
  if (s === 'h')
    return (
      <span className="w-[14px] h-[14px] rounded-[2px] border border-[#8a8a8a] flex items-center justify-center">
        <span className="block w-[10px] h-[10px] rounded-[1px] bg-[#82b6f5]" />
      </span>
    );
  if (s === 'd') return <span className="block w-[14px] h-[14px] rounded-[2px] border border-[#bdbdbd] bg-[#efefef]" />;
  return <span className="block w-[14px] h-[14px] rounded-[2px] border border-[#8a8a8a] bg-white" />;
};

const PROPS = [
  [11, '侧面构造或受...', 'G6虫12', 1, 1], [12, '拉筋', '(中8)', 1, 1], [13, '定额类别', '连续梁', 1, 1], [14, '材质', '现浇混凝土', 1, 1],
  [15, '混凝土类型', '(3现浇砼 碎石...', 1, 1], [16, '混凝土强度等级', '(C25)', 1, 1], [17, '混凝土外加剂', '(无)', 1, 0], [18, '泵送类型', '(混凝土泵)', 1, 0],
  [19, '泵送高度(m)', '', 0, 0], [20, '截面周长(m)', '2.9', 1, 1, 1], [21, '截面面积(m²)', '0.45', 1, 1, 1], [22, '起点顶标高(m)', '层顶标高', 0, 1],
  [23, '终点顶标高(m)', '层顶标高', 0, 1], [24, '备注', '', 0, 1],
];

const PropPanel = () => (
  <div className="flex-1 min-h-0 flex flex-col border-x border-[#c8cacd] relative overflow-hidden bg-white">
    <PanelTitle />
    <Tabs2 a="属性列表" b="图层管理" h="h-[23px]" />
    <div className="flex-1 overflow-hidden w-[259px] text-[#333]">
      <div className="flex h-[21px] border-b border-[#d0d0d0] bg-[#efefef]">
        <div className="w-[22px] border-r border-[#d0d0d0]" />
        <div className="w-[100px] flex items-center justify-center border-r border-[#d0d0d0]">属性名称</div>
        <div className="w-[96px] flex items-center justify-center bg-[#78b4f8] text-white">属性值</div>
        <div className="w-[41px] flex items-center justify-center border-r border-[#d0d0d0]">附加</div>
      </div>
      {PROPS.map(([n, name, v, blue, chk, grey]) => (
        <div key={n} className="flex h-[21px] border-b border-[#d8d8d8]">
          <div className="w-[22px] flex items-center justify-center bg-[#efefef] border-r border-[#d0d0d0]">{n}</div>
          <div className={'w-[100px] flex items-center pl-[3px] border-r border-[#d0d0d0] whitespace-nowrap ' + (blue ? 'text-[#3b74e4]' : '')}>{name}</div>
          <div className={'w-[96px] flex items-center pl-[3px] border-r border-[#d0d0d0] whitespace-nowrap ' + (grey ? 'bg-[#e8e8e8] text-[#9a9a9a]' : '')}>{v}</div>
          <div className="w-[41px] flex items-center justify-center border-r border-[#d0d0d0]">{chk ? <Box /> : null}</div>
        </div>
      ))}
      <div className="flex h-[21px] border-b border-[#d8d8d8]">
        <div className="w-[22px] flex items-center justify-center bg-[#efefef] border-r border-[#d0d0d0]">25</div>
        <div className="w-[100px] flex items-center pl-[3px] border-r border-[#d0d0d0]">
          <span className="w-[12px] h-[12px] rounded-[2px] border border-[#777] flex items-center justify-center"><span className="block w-[6px] h-[1px] bg-[#555]" /></span>
          <span className="ml-[6px] whitespace-nowrap">钢筋业务属性</span>
        </div>
        <div className="w-[96px] bg-[#efefef] border-r border-[#d0d0d0]" />
        <div className="w-[41px] border-r border-[#d0d0d0]" />
      </div>
      <div className="flex h-[21px] border-b border-[#d8d8d8]">
        <div className="w-[22px] flex items-center justify-center bg-[#78b4f8] text-white font-bold border-r border-[#d0d0d0]">26</div>
        <div className="w-[100px] flex items-center pl-[9px] border-r border-[#d0d0d0] text-[#3b74e4]">
          <span className="block w-[16px] h-[1px] bg-[#d8d8d8] mr-[6px]" />
          <span className="whitespace-nowrap">其它钢筋</span>
        </div>
        <div className="w-[96px] border-2 border-[#6aa5ea] flex items-center justify-end pr-[3px]">
          <span className="w-[16px] h-[11px] rounded-[2px] border border-[#6aa5ea] flex items-center justify-center text-[#3b74e4] leading-none text-[9px]">…</span>
        </div>
        <div className="w-[41px] border-r border-[#d0d0d0]" />
      </div>
      <div className="flex h-[21px] border-b border-[#d8d8d8]">
        <div className="w-[22px] flex items-center justify-center bg-[#efefef] border-r border-[#d0d0d0]">27</div>
        <div className="w-[100px] flex items-center pl-[9px] border-r border-[#d0d0d0] text-[#3b74e4]">
          <span className="block w-[16px] h-[1px] bg-[#d8d8d8] mr-[6px]" />
          <span className="whitespace-nowrap">其它箍筋</span>
        </div>
        <div className="w-[96px] border-r border-[#d0d0d0]" />
        <div className="w-[41px] flex items-center justify-center border-r border-[#d0d0d0]"><Box /></div>
      </div>
      <div className="flex h-[21px]">
        <div className="w-[22px] bg-[#efefef] border-r border-[#d0d0d0]" />
        <div className="w-[100px] border-r border-[#d0d0d0]" />
        <div className="w-[96px] border-r border-[#d0d0d0]" />
        <div className="w-[41px] flex justify-center border-r border-[#d0d0d0]"><Box /></div>
      </div>
    </div>
    <div className="absolute left-[263px] top-[148px] w-[8px] h-[168px] rounded-full bg-[#c9c9c9]" />
  </div>
);

const Cad = () => (
  <div className="flex-1 min-w-0 bg-black relative overflow-hidden">
    <svg viewBox="425 165 1216 845" width="1216" height="845" className="block" fill="none" shapeRendering="crispEdges">
      <path d="M425 191H1641" stroke="#800080" strokeWidth="2" />
      <path d="M425 298H1641" stroke="#e0e0e0" />
      <circle cx="609" cy="413" r="43" stroke="#00c800" strokeWidth="1.200" shapeRendering="auto" />
      <circle cx="1167" cy="413" r="43" stroke="#00c800" strokeWidth="1.200" shapeRendering="auto" />
      <circle cx="1353" cy="414" r="43" stroke="#00c800" strokeWidth="1.200" shapeRendering="auto" />
      <text x="592" y="442" fill="none" stroke="#e8e8e8" strokeWidth=".6" fontSize="64" fontFamily="Liberation Serif, serif" textLength="22" lengthAdjust="spacingAndGlyphs">1</text>
      <text x="1149" y="440" fill="none" stroke="#e8e8e8" strokeWidth=".6" fontSize="64" fontFamily="Liberation Serif, serif" textLength="25" lengthAdjust="spacingAndGlyphs">2</text>
      <text x="1327" y="431" fill="none" stroke="#e8e8e8" strokeWidth=".6" fontSize="52" fontFamily="Liberation Serif, serif" textLength="36" lengthAdjust="spacingAndGlyphs">1/2</text>
      <path d="M608 456V738M1168 456V741" stroke="#00b400" />
      <path d="M1354 457V741" stroke="#008a00" strokeWidth="2" />
      <path d="M608 531H1641" stroke="#14f014" />
      <path d="M608 617H1168" stroke="#14f014" strokeWidth="2" />
      <path d="M1168 617H1641" stroke="#14f014" />
      <path d="M602 537l12-12M602 623l12-12M1162 623l12-12M1348 623l12-12" stroke="#14e014" />
      <text x="855" y="608" fill="#00c000" fontSize="33" fontFamily="DejaVu Sans, sans-serif" fontWeight="200" textLength="45" lengthAdjust="spacingAndGlyphs">7800</text>
      <text x="1226" y="608" fill="#00c000" fontSize="33" fontFamily="DejaVu Sans, sans-serif" fontWeight="200" textLength="46" lengthAdjust="spacingAndGlyphs">2600</text>
      <text x="1505" y="608" fill="#00c000" fontSize="33" fontFamily="DejaVu Sans, sans-serif" fontWeight="200" textLength="46" lengthAdjust="spacingAndGlyphs">5200</text>
      <path d="M508 738H1361" stroke="#808000" />
      <path d="M1361 738V659H1641" stroke="#b0b000" />
      <path d="M508 738V1010" stroke="#d8d8d8" />
      <path d="M661 738L508 891" stroke="#8c8c8c" shapeRendering="auto" />
      <path d="M985 738L713 1010" stroke="#808080" shapeRendering="auto" />
      <path d="M1309 738L1038 1010" stroke="#a8a8a8" shapeRendering="auto" />
      <path d="M1641 730L1362 1010" stroke="#d0d0d0" shapeRendering="auto" />
      <path d="M1361 686L1388 659" stroke="#a8a8a8" shapeRendering="auto" />
      <path d="M609 738V1010" stroke="#c00000" strokeDasharray="60 3" />
      <path d="M601 845V1010" stroke="#c8c8c8" />
      <path d="M623 914V1010" stroke="#008000" strokeWidth="2" />
      <path d="M660 845H1429" stroke="#30f030" />
      <path d="M660 867H1139M1196 867H1429" stroke="#008000" strokeWidth="2" />
      <path d="M1461 845V759H1641M1479 845V777H1641" stroke="#14d814" />
      <path d="M561 852H1641" stroke="#e00000" />
      <rect x="601" y="845" width="59" height="69" stroke="#e8e800" />
      <rect x="1139" y="845" width="57" height="58" stroke="#e8e800" />
      <rect x="1429" y="845" width="57" height="58" stroke="#e8e800" />
      <path d="M474 958V945" stroke="#00e000" strokeWidth="2" />
      <path d="M474 930l5 16h-10z" fill="#00f000" />
      <text x="469" y="928" fill="#00e000" fontSize="13" fontFamily="Liberation Sans, sans-serif" textLength="10" lengthAdjust="spacingAndGlyphs">Y</text>
      <path d="M478 960H495" stroke="#f00000" strokeWidth="5" />
      <path d="M504 960l-12 6v-12z" fill="#f00000" />
      <ellipse cx="475" cy="960" rx="5" ry="6" fill="#0000c0" />
      <text x="506" y="966" fill="#e00000" fontSize="13" fontFamily="Liberation Sans, sans-serif" textLength="8" lengthAdjust="spacingAndGlyphs">X</text>
      <rect x="556" y="383" width="842" height="325" rx="1" stroke="#ff2010" strokeWidth="4" />
    </svg>
    <div className="absolute right-0 top-[1px] w-[33px] h-[227px] bg-[#939598] flex flex-col items-center pt-[10px]">
      <svg width="26" height="24" viewBox="0 0 26 24"><defs><radialGradient id="sph" cx=".35" cy=".3" r=".8"><stop offset="0" stopColor="#fff" /><stop offset="1" stopColor="#555" /></radialGradient></defs><circle cx="13" cy="11" r="9" fill="url(#sph)" /><path d="M2 18c8-1 18-8 22-15" stroke="#444" strokeWidth="1.300" fill="none" /></svg>
      <svg width="26" height="24" viewBox="0 0 26 24" fill="none" className="mt-[5px]"><path d="M1 6l5-5h19v17l-5 5H1zM1 6h19v17M20 6l5-5" stroke="#444" fill="#8a8c8f" /><text x="7" y="21" fontSize="9" fill="#333" fontFamily="Liberation Sans, sans-serif">3D</text></svg>
      <svg width="26" height="24" viewBox="0 0 26 24" fill="none" className="mt-[4px]"><path d="M1 6l5-5h19v17l-5 5H1z" fill="#cfe0f8" stroke="#333" /><path d="M1 6h19v17M20 6l5-5" stroke="#333" /><path d="M6 1v17h19M6 18l-5 5" stroke="#7aa" /></svg>
      <Caret c="mt-[6px]" />
      <svg width="26" height="24" viewBox="0 0 26 24" fill="none" className="mt-[5px]"><path d="M1 6l5-5h19v17l-5 5H1z" fill="#84888c" stroke="#444" /><path d="M1 6h19v17M20 6l5-5" stroke="#444" /></svg>
      <Caret c="mt-[6px]" />
      <svg width="24" height="24" viewBox="0 0 24 24" fill="none" className="mt-[6px]"><path d="M20 7a10 10 0 1 0 2 7" stroke="#444" strokeWidth="1.500" /><path d="M22 1v7h-7" stroke="#444" strokeWidth="1.500" /></svg>
      <Caret c="mt-[6px]" />
      <span className="block w-[26px] h-[1px] bg-[#555] mt-[6px]" />
      <svg width="26" height="24" viewBox="0 0 26 24" fill="none" className="mt-[4px]"><rect x="1" y="3" width="24" height="20" stroke="#444" /><path d="M1 6h24M13 6v17M4 10h3M4 14h3M4 18h3M16 10h3M16 14h3M16 18h3" stroke="#333" /></svg>
    </div>
    <div className="absolute left-[383px] top-[261px] w-[287px] h-[171px] bg-[#efefef] border border-[#c8cacd] flex flex-col text-[#333]">
      <div className="h-[27px] flex-none bg-[#2f7fe0] text-white flex items-center pl-[9px] pr-[8px] pb-[2px]">
        <span>设置比例</span>
        <svg width="9" height="9" viewBox="0 0 9 9" fill="none" className="ml-auto"><path d="M1 1l7 7M8 1L1 8" stroke="#fff" strokeWidth="1.300" /></svg>
      </div>
      <div className="px-[21px] pt-[23px]">
        <div className="h-[14px] leading-[14px]">输入两点之间实际尺寸以调整比例</div>
        <div className="mt-[22px] h-[26px] w-[244px] bg-white border border-[#6f95d8] flex items-center pl-[2px]">
          <span className="bg-[#0078d7] text-white px-[1px] h-[17px] leading-[17px]">7800</span>
        </div>
        <div className="mt-[21px] flex justify-end gap-[6px]">
          <div className="w-[80px] h-[26px] rounded-[3px] bg-[#2f7fe0] text-white flex items-center justify-center">确定</div>
          <div className="w-[80px] h-[26px] rounded-[3px] bg-white border border-[#cfcfcf] flex items-center justify-center">取消</div>
        </div>
      </div>
    </div>
  </div>
);

const Splitter = () => (
  <div className="w-[4px] flex-none bg-white">
    <div className="w-full h-[100px] mt-[373px] bg-[#6f7680]" />
  </div>
);

const DISP = [
  ['所有构件', 0, 'h', 'u'], ['轴线', 1, 'c', 'd'], ['轴网', 2, 'c', 'd'], ['辅助轴线', 2, 'c', 'd'],
  ['柱', 1, 'h', 'u'], ['柱', 2, 'c', 'u'], ['构造柱', 2, 'c', 'u'], ['砌体柱', 2, 'u', 'u'],
  ['墙', 1, 'h', 'u'], ['剪力墙', 2, 'c', 'u'], ['人防门框墙', 2, 'c', 'u'], ['砌体墙', 2, 'c', 'u'], ['砌体加筋', 2, 'u', 'u'], ['保温墙', 2, 'u', 'u'], ['暗梁', 2, 'u', 'u'], ['墙垛', 2, 'u', 'u'], ['幕墙', 2, 'c', 'u'],
  ['门窗洞', 1, 'u', 'u'], ['', 2, 'u', 'u'], ['窗', 2, 'u', 'u'], ['门联窗', 2, 'u', 'u'], ['墙洞', 2, 'u', 'u'], ['带形窗', 2, 'u', 'u'], ['带形洞', 2, 'u', 'u'], ['飘窗', 2, 'u', 'u'], ['老虎窗', 2, 'u', 'u'], ['过梁', 2, 'u', 'u'], ['壁龛', 2, 'u', 'u'],
  ['梁', 1, 'c', 'u'], ['梁', 2, 'c', 'u'], ['连梁', 2, 'c', 'u'], ['圈梁', 2, 'c', 'u'],
  ['板', 1, 'h', 'u'], ['现浇板', 2, 'c', 'u'], ['', 2, 'u', 'u'],
];

const MinusBox = () => (
  <span className="flex-none w-[12px] h-[12px] rounded-[2px] border border-[#777] bg-white flex items-center justify-center"><span className="block w-[6px] h-[1px] bg-[#555]" /></span>
);

const DispRow = ({ r, i }) => {
  const [t, lvl, show, name] = r;
  const next = DISP[i + 1];
  const last = lvl === 2 && (!next || next[1] !== 2);
  return (
    <div className="flex h-[21px] border-b border-[#d0d0d0]">
      <div className="w-[125px] flex-none flex items-center border-x border-[#d0d0d0]">
        {lvl === 0 && (
          <>
            <span className="ml-[1px]"><MinusBox /></span>
            <span className="ml-[6px]">{t}</span>
          </>
        )}
        {lvl === 1 && (
          <>
            <span className="block flex-none w-[7px] h-full border-r border-[#d8d8d8]" />
            <span className="ml-[3px]"><MinusBox /></span>
            <span className="ml-[6px]">{t}</span>
          </>
        )}
        {lvl === 2 && (
          <>
            <span className="block flex-none w-[7px] h-full border-r border-[#d8d8d8]" />
            <span className="block flex-none w-[16px] ml-[9px] border-l border-[#d8d8d8] self-start h-[10px] border-b" />
            {!last && <span className="block flex-none h-[21px] w-0 -ml-[16px] mr-[16px] border-l border-[#d8d8d8]" />}
            <span className="ml-[7px] whitespace-nowrap">{t}</span>
          </>
        )}
      </div>
      <div className={'w-[63px] flex-none flex items-center justify-center border-r ' + (i === 0 ? 'border-2 border-[#777]' : 'border-[#d0d0d0]')}><Box s={show} /></div>
      <div className="w-[63px] flex-none flex items-center justify-center border-r border-[#d0d0d0]"><Box s={name} /></div>
    </div>
  );
};

const RightPanel = () => (
  <div className="w-[275px] flex-none flex flex-col border-l border-[#c8cacd] relative bg-white">
    <PanelTitle />
    <div className="h-[22px] flex-none bg-[#efefef] border-b border-[#d3d5d8] flex items-center pl-[8px] text-[#8c8c8c]">显示设置</div>
    <div className="flex items-end gap-[3px] h-[29px] flex-none bg-[#fafafa] pl-[3px]">
      <div className="w-[75px] h-[25px] rounded-t-[3px] bg-white border border-b-0 border-[#c8cacd] text-[#3f96f0] flex items-center justify-center">图元显示</div>
      <div className="w-[74px] h-[23px] rounded-t-[3px] bg-[#d9dadc] text-[#666] flex items-center justify-center">楼层显示</div>
    </div>
    <div className="ml-[2px] w-[269px] h-[740px] flex-none border border-[#c8cacd] pt-[2px] pl-[1px] overflow-hidden relative">
      <div className="flex h-[21px] border-b border-[#d0d0d0] w-[251px] text-[#444]">
        <div className="w-[125px] bg-[#efefef] flex items-center justify-center">图层构件</div>
        <div className="w-[63px] bg-[#78b4f8] text-white flex items-center justify-center">显示图元</div>
        <div className="w-[63px] bg-[#efefef] flex items-center justify-center">显示名称</div>
      </div>
      <div className="w-[251px]">
        {DISP.map((r, i) => <DispRow key={i} r={r} i={i} />)}
      </div>
      <div className="absolute left-[256px] top-[14px] w-[8px] h-[206px] rounded-full bg-[#c9c9c9]" />
    </div>
    <div className="flex justify-end pt-[7px] pr-[9px]">
      <div className="w-[90px] h-[26px] rounded-[3px] border border-[#d0d0d0] flex items-center justify-center text-[#333]">恢复默认设置</div>
    </div>
    <div className="absolute left-[34px] top-[465px] w-[208px] h-[23px] bg-white border border-[#c8cacd] flex items-center text-[#2b7fd6]">
      <span className="-ml-[1px] mt-[1px] w-[26px] h-[24px] rounded-[5px] bg-[#e8501d] text-white text-[20px] font-bold flex items-center justify-center [font-family:'Liberation_Sans',sans-serif]">S</span>
      <span className="ml-[6px] w-[20px] text-[14px] font-bold">中</span>
      <span className="w-[22px] text-[14px] font-bold">°,</span>
      <svg width="16" height="16" viewBox="0 0 16 16" fill="none" className="mr-[6px]"><circle cx="8" cy="8" r="7" stroke="#2b7fd6" strokeWidth="1.500" /><path d="M5 6v1M11 6v1M4.500 10c2 2.500 5 2.500 7 0" stroke="#2b7fd6" strokeWidth="1.300" /></svg>
      <svg width="16" height="16" viewBox="0 0 16 16" fill="none" className="mr-[6px]"><rect x="5" y="1" width="6" height="10" rx="3" fill="#2b7fd6" /><path d="M3 7a5 5 0 0 0 10 0M8 12v3" stroke="#2b7fd6" strokeWidth="1.300" /></svg>
      <svg width="16" height="12" viewBox="0 0 16 12" fill="none" className="mr-[8px]"><rect x=".5" y=".5" width="15" height="11" rx="1" stroke="#2b7fd6" /><path d="M3 4h10M3 6.500h10" stroke="#2b7fd6" strokeDasharray="1.500 1" /><path d="M4 9h8" stroke="#2b7fd6" /></svg>
      <svg width="16" height="16" viewBox="0 0 16 16" className="mr-[5px]"><circle cx="8" cy="4" r="3" fill="#c8d2dc" /><path d="M1 14c0-4 3-6 7-6s7 2 7 6z" fill="#c8d2dc" /></svg>
      <svg width="14" height="14" viewBox="0 0 14 14" className="mr-[7px]"><path d="M4 1L0 4l2 3 1-.5V13h8V6.500L12 7l2-3-4-3-1 1.500H5z" fill="#2b7fd6" /></svg>
      <svg width="14" height="14" viewBox="0 0 14 14" fill="#2b7fd6"><rect x="0" y="0" width="6" height="6" /><rect x="8" y="0" width="6" height="6" /><rect x="0" y="8" width="6" height="6" /><rect x="8" y="8" width="6" height="6" /></svg>
    </div>
  </div>
);

const SBtn = ({ w, on, children }) => (
  <div className={'h-[24px] flex-none flex items-center justify-center border-2 ' + w + (on ? ' border-[#3f96f0] bg-white' : ' border-[#b0b0b0] bg-[#cfcfd1]')}>{children}</div>
);

const Status = () => (
  <div className="h-[29px] flex-none bg-[#dcdcde] flex items-center text-[#444]">
    <span className="w-[265px] pl-[2px] flex-none">X = 7800 Y = 57283</span>
    <span className="w-[82px] flex-none">层高:&nbsp;&nbsp;4.9</span>
    <span className="w-[135px] flex-none">标高:&nbsp;&nbsp;-7~-2.1</span>
    <span className="w-[102px] flex-none">0</span>
    <span className="w-[104px] flex-none">隐藏:&nbsp;&nbsp;0</span>
    <SBtn w="w-[24px] mr-[4px]" on>
      <svg width="16" height="16" viewBox="0 0 16 16" fill="none"><path d="M3 1v13h11M3 9h5v5" stroke={B} strokeWidth="1.300" /></svg>
    </SBtn>
    <SBtn w="w-[35px] mr-[7px]" on>
      <svg width="13" height="20" viewBox="0 0 13 20" fill="none"><rect x="1" y="2" width="11" height="16" stroke={B} /><rect x="0" y="0" width="4" height="5" fill={O} /></svg>
      <Caret c="ml-[4px]" />
    </SBtn>
    <SBtn w="w-[24px] mr-[6px]">
      <svg width="16" height="18" viewBox="0 0 16 18" fill="none"><path d="M2 1l12 16M14 1L2 17" stroke="#8a8a8a" /></svg>
    </SBtn>
    <SBtn w="w-[37px] mr-[3px]">
      <svg width="16" height="16" viewBox="0 0 16 16" fill="none"><path d="M1 14h13M1 14L11 3" stroke="#444" /><path d="M6 8v6M9 11h3" stroke="#444" /></svg>
      <Caret c="ml-[3px]" />
    </SBtn>
    <SBtn w="w-[35px] mr-[4px]">
      <svg width="16" height="16" viewBox="0 0 16 16" fill="none"><path d="M3 1v6M0 4h6" stroke="#444" /><rect x="6" y="9" width="8" height="6" fill="#333" /></svg>
      <Caret c="ml-[3px]" />
    </SBtn>
    <SBtn w="w-[72px] mr-[3px]">跨图层选择</SBtn>
    <SBtn w="w-[61px] mr-[6px]">折线选择</SBtn>
    <span>指定下一点</span>
    <span className="ml-auto mr-[30px]">200 FPS</span>
  </div>
);

const Taskbar = () => (
  <div className="h-[9px] flex-none border-t border-white bg-gradient-to-r from-[#202428] via-[#202428] to-[#4a3c2c] flex overflow-hidden">
    <div className="ml-[373px] w-[160px] h-full bg-[#4a4a4a]" />
    <span className="ml-auto mr-[22px] text-white text-[12px] leading-[12px] pt-[6px]">10:48</span>
  </div>
);

export default function App() {
  return (
    <div className="relative w-[1920px] h-[1048px] overflow-hidden bg-white flex flex-col text-[12px] leading-none text-[#333] [font-family:'Noto_Sans_CJK_SC','Noto_Sans',sans-serif]">
      <Header />
      <Ribbon />
      <ComboBar />
      <div className="flex h-[845px] flex-none">
        <NavPanel />
        <div className="w-[5px] flex-none bg-white" />
        <div className="w-[276px] flex-none flex flex-col">
          <CompPanel />
          <div className="h-[5px] flex-none bg-white" />
          <PropPanel />
        </div>
        <Splitter />
        <Cad />
        <Splitter />
        <RightPanel />
      </div>
      <Status />
      <Taskbar />
      <svg width="1920" height="1048" viewBox="0 0 1920 1048" className="absolute left-0 top-0 pointer-events-none">
        <path d="M192.600 79.200L789 484L793 487L802 502L782.500 501L782 495L191.400 80.800Z" fill="#ff2010" />
      </svg>
    </div>
  );
}
